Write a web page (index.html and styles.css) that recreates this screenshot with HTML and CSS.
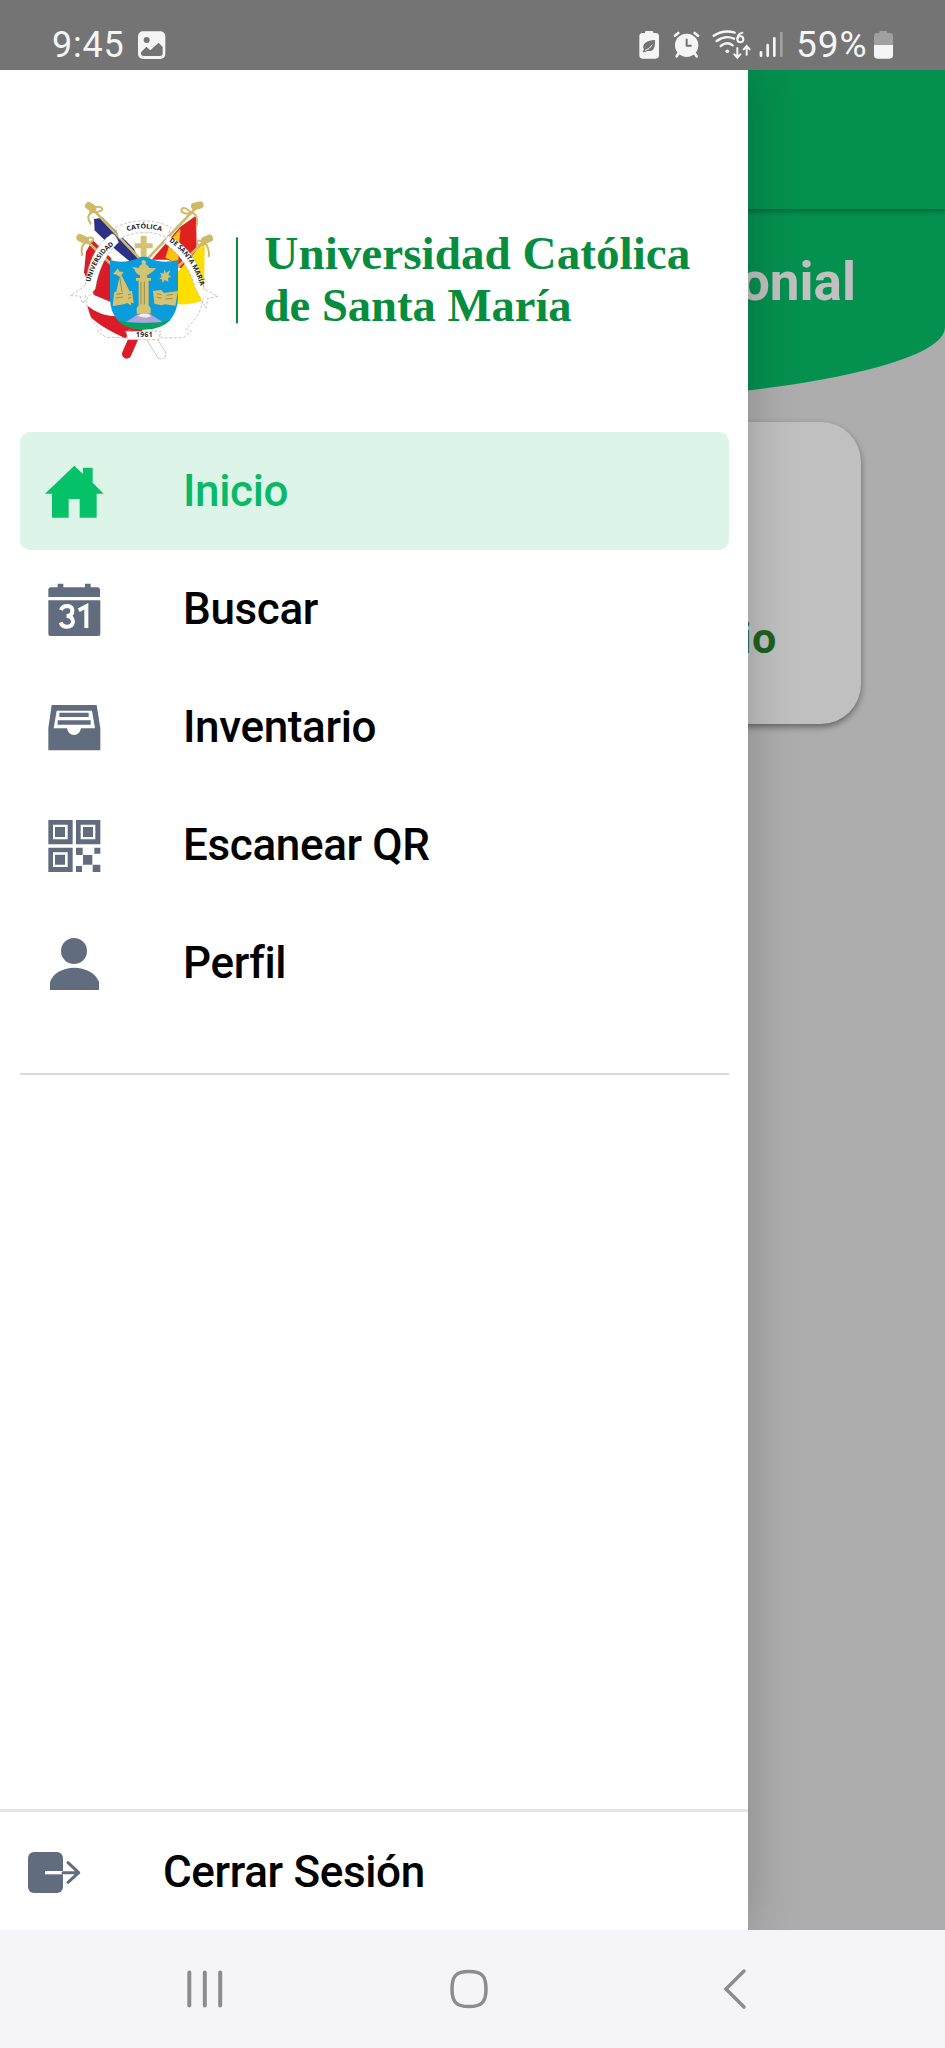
FILE: index.html
```html
<!DOCTYPE html>
<html lang="es">
<head>
<meta charset="utf-8">
<title>Universidad Católica de Santa María</title>
<link rel="stylesheet" href="styles.css">
</head>
<body>
<div class="phone">
  <header class="status">
    <span class="clock">9:45</span>
    <svg class="st-img" width="28" height="30" viewBox="414 90 84 90"><rect x="414" y="94" width="82" height="83" rx="15" fill="#f5f5f5"/><circle cx="440" cy="120" r="9" fill="#747474"/><path d="M423 157l16-17 12 11 25-23 12 13v19q0 8-8 8h-49q-8 0-8-8z" fill="#747474"/></svg>
    <div class="status-right">
      <svg width="22" height="30" viewBox="54 90 66 90"><path d="M75 99v-3q0-3 4-3h17q4 0 4 3v3h7q10 0 10 10v57q0 10-10 10H68q-10 0-10-10v-57q0-10 10-10z" fill="#f5f5f5"/><path d="M105 120c2 26-7 35-20 33-8 0-10 4-14 4-5-2-3-5 1-7-8-17 6-29 33-30z" fill="#747474"/><path d="M75 151q13-2 22-17" stroke="#f5f5f5" stroke-width="3" fill="none"/></svg>
      <svg class="st-alarm" width="27" height="30" viewBox="159 90 81 90"><g stroke="#f5f5f5" stroke-width="8" stroke-linecap="round"><path d="M165 107l10-8M224 99l10 8M176 160l-6 9M224 160l6 9"/></g><circle cx="200" cy="136" r="35" fill="#f5f5f5"/><path d="M200 116v21h15" fill="none" stroke="#747474" stroke-width="6"/></svg>
      <svg class="st-wifi" width="40" height="30" viewBox="276 90 120 90"><g fill="none" stroke="#f5f5f5" stroke-width="7" stroke-linecap="round"><path d="M281 107Q312 88 344 98M290 123Q316 104 342 116M302 138Q321 123 338 136"/><path d="M367 98Q352 102 352 117" stroke-width="6"/><circle cx="361" cy="118" r="9" stroke-width="6"/><path d="M352 144v28M343 163l9 10 9-10M380 164v-26M371 148l9-10 9 10" stroke-width="6"/></g><circle cx="322" cy="154" r="5.500" fill="#f5f5f5"/></svg>
      <svg class="st-signal" width="25" height="30" viewBox="417 90 75 90"><g stroke="#f5f5f5" stroke-width="8" stroke-linecap="round"><path d="M423 157v10M443 135v32M463 115v52"/><path d="M484 99v68" opacity=".35"/></g></svg>
      <span class="percent">59%</span>
      <svg width="21" height="30" viewBox="759 90 63 90"><path d="M778 99v-3q0-3 4-3h16q4 0 4 3v3h8q9 0 9 9v27h-57v-27q0-9 9-9z" fill="#a0a0a0"/><path d="M762 135h57v31q0 10-10 10h-37q-10 0-10-10z" fill="#f5f5f5"/></svg>
    </div>
  </header>

  <div class="screen">
    <div class="appbar"></div>
    <section class="hero"><h1 class="hero-title">onial</h1></section>
    <section class="card"><span class="card-label">io</span></section>

    <aside class="drawer">
      <div class="brand">
        <svg width="660" height="190" viewBox="0 0 1980 570">
          <!-- flags -->
          <g>
            <path d="M98 165L78 200 72 262 88 300 102 330 154 352V220z" fill="#d91c27"/>
            <path d="M80 345Q105 350 155 352L160 400 90 372z" fill="#fff"/>
            <path d="M82 362Q120 395 180 394L222 430 196 460Q120 425 92 396z" fill="#d91c27"/>
            <path d="M104 100l22-8 60 42 72 86-44 6-58-42z" fill="#fff"/>
            <path d="M102 102l26-4L222 192l18 38-32-2Q136 170 104 136z" fill="#2c3086"/>
            <path d="M408 92L360 126 275 224H322L400 250 410 180z" fill="#e02020"/>
            <path d="M360 132l30 52 2 70-76-36 18-56z" fill="#fcc20d"/>
            <path d="M408 92L362 128 358 170 354 245 375 256 408 190z" fill="#df231c"/>
            <path d="M434 180L432 345Q395 360 352 358V262L418 188z" fill="#ffde00"/>
            <path d="M352 360Q395 364 430 346Q424 400 376 436L310 426z" fill="#fff"/>
          </g>
          <!-- poles and bows -->
          <g fill="none" stroke="#cdbb65" stroke-width="8" stroke-linecap="round">
            <path d="M94 68L238 220M72 160L160 244M408 68L262 222M434 168L340 258"/>
            <path d="M90 82q20-24 34-14 12 12-28 14-20 10-4 34M68 168q20-16 30-8 10 10-24 14-12 12-8 36M394 84q-24-24-30-10 0 16 36 10 16 12 10 38M430 172q-20-12-18 2 4 14 26 2 12 20 8 38" stroke-width="6"/>
            <path d="M86 62l12 8M60 158l16 8M404 64l16-4M434 166l14-6" stroke-width="22"/>
          </g>
          <!-- crossed shafts -->
          <path d="M236 425L200 507" stroke="#d91c27" stroke-width="28" stroke-linecap="round"/>
          <path d="M262 440L304 508" stroke="#aaa" stroke-width="30" stroke-linecap="round"/><path d="M262 440L304 508" stroke="#fff" stroke-width="27" stroke-linecap="round"/>
          <!-- ribbon -->
          <g fill="#fff" stroke="#aaa" stroke-width="2" stroke-dasharray="9 5">
            <path d="M76 300Q88 190 156 146Q166 146 176 172Q120 222 106 312L68 356 60 333 30 332Q62 315 76 300z"/>
            <path d="M431 312Q416 196 324 152L311 172Q384 224 405 308L438 370 443 340 474 334z"/>
            <path d="M166 127Q250 88 333 127L321 158Q252 124 178 162z"/>
            <path d="M76 330Q82 402 125 435L112 438 138 457 208 458 196 440 218 430H284L300 446 304 459 370 458 394 438 378 432Q424 391 430 338" fill="none"/>
            <path d="M198 439H302L296 464H204z"/>
          </g>
          <!-- shield -->
          <path d="M150 225Q190 238 235 220Q251 205 268 220Q306 238 354 225V340Q350 430 252 432Q151 430 150 340z" fill="#0b9cdc"/>
          <path d="M170 404Q206 416 250 414Q300 416 334 403Q305 434 252 434Q198 434 170 404z" fill="#08a35c"/>
          <path d="M198 411L234 388 270 387 308 411Q252 416 198 411z" fill="#b4a4d1"/><path d="M232 393l14-8h16l12 9-16 4z" fill="#eee"/>
          <g fill="#d5c374">
            <path d="M242 153h18v22h18v15h-18v25h-18v-25h-18v-15h18z"/>
            <path d="M224 254l-8-8 20 3q3-10 11-12l-4-7 8-6 8 7-3 6q9 4 12 12l21 1q-22 20-29 22l2 7h11v8h-7v74l6 9v16h-42v-16l6-9v-74h-8v-8h12v-8q-12-4-16-17z"/>
            <path d="M173 250l6 10 12 1-7 10 5 8 24 48v34l-12-7-39 8 7-43 10-43-9-7-12-2 9-8z"/>
            <path d="M163 321l30-6 4 10 19-8 5 38-19-5-7 7-37 6zM279 318l25-3 8 9 42-6-8 44-31-4-11 3-21-5z"/>
            <path d="M313 253l5 11 13-8-6 15 9 3-10 5 1 11-11-5-6 9-2-11-8-2 7-6-5-12 11 3z"/>
          </g>
          <path d="M169 328l20-3M168 339l21-3M291 326l14 3M290 337l14 2M319 331l20-3M317 342l21-2M204 330l9-3M205 340l9-3M179 275l7 45M243 290v68M253 290v68" stroke="#80712f" stroke-width="2"/>
          <defs><path id="arc-left" d="M91 292Q107 215 168 176"/><path id="arc-top" d="M202 139Q253 121 307 140"/><path id="arc-right" d="M327 169Q396 214 424 312"/></defs>
          <g class="ribbon-text">
            <text textLength="136" lengthAdjust="spacingAndGlyphs"><textPath href="#arc-left">UNIVERSIDAD</textPath></text>
            <text textLength="104" lengthAdjust="spacingAndGlyphs"><textPath href="#arc-top">CATÓLICA</textPath></text>
            <text textLength="168" lengthAdjust="spacingAndGlyphs"><textPath href="#arc-right">DE SANTA MARÍA</textPath></text>
            <text x="228" y="456" textLength="50">1961</text>
          </g>
          <rect x="528" y="157" width="6" height="258" fill="#078d3d"/>
          <g class="brand-name">
            <text x="613" y="252" textLength="1278" lengthAdjust="spacingAndGlyphs">Universidad Católica</text>
            <text x="611" y="408" textLength="924" lengthAdjust="spacingAndGlyphs">de Santa María</text>
          </g>
        </svg>
      </div>

      <nav class="menu">
        <a class="item active"><svg class="icon" viewBox="132 123 180 180"><path d="M223 137L249 162V143H278V188L311 221H290V293H239V237H206V293H156V221H135z"/></svg><span>Inicio</span></a>
        <a class="item"><svg class="icon" viewBox="132 477 180 180"><path d="M145 531V510q0-8 8-8h20v-11h17v11h65v-11h17v11h20q8 0 8 8v21zM145 541H301V642q0 6-6 6H151q-6 0-6-6z"/><path d="M183 570q5-12 19-12 15 1 15 14 0 15-17 16 19 1 19 17-2 15-18 15-15 0-19-13M236 571l23-12v65" fill="none" stroke="#fff" stroke-width="12"/></svg><span>Buscar</span></a>
        <a class="item"><svg class="icon" viewBox="132 111 180 180"><path fill-rule="evenodd" d="M155 135H290L301 205V271H145V205zM170 152L161 205H201Q205 225 222 225T243 205H285L276 152z"/><path d="M178 158h88v13h-88zM173 181h99v13h-99z"/></svg><span>Inventario</span></a>
        <a class="item"><svg class="icon" viewBox="132 465 180 180"><path fill-rule="evenodd" d="M145 480h73v73h-73zm14 14v44h44v-44zM228 480h73v73h-73zm14 14v44h44v-44zM145 563h73v73h-73zm14 14v44h44v-44z"/><path d="M165 501h30v30h-30zM249 501h30v30h-30zM165 584h30v30h-30zM228 563h20v22h29v29h24v22h-23v-22h-29v-29h-21zM283 563h18v18h-18zM228 618h18v18h-18z"/></svg><span>Escanear QR</span></a>
        <a class="item"><svg class="icon" viewBox="132 129 180 180"><circle cx="222" cy="183" r="39"/><path d="M150 300V276C158 249 191 233 223 233S288 249 297 276V300z"/></svg><span>Perfil</span></a>
      </nav>
      <hr class="divider">
      <footer class="logout"><svg class="icon" viewBox="72 153 180 180"><rect x="84" y="186" width="105" height="123" rx="18"/><path d="M135 248h54" stroke="#fff" stroke-width="10"/><path d="M189 248h47M204 218l32 30-32 29" fill="none" stroke="#616d7e" stroke-width="9" stroke-linecap="round" stroke-linejoin="round"/></svg><span>Cerrar Sesión</span></footer>
    </aside>
  </div>

  <footer class="navbar">
    <svg width="36" height="40" viewBox="0 0 36 40"><path d="M2.300 3.500v33M17.800 3.500v33M33.200 3.500v33" stroke="#8c8c8e" stroke-width="4" stroke-linecap="round"/></svg>
    <svg class="nav-home" width="40" height="40" viewBox="0 0 40 40"><path d="M20 2.500C33 2.500 37 7 37 20S33 37.500 20 37.500 3 33 3 20 7 2.500 20 2.500z" fill="none" stroke="#8c8c8e" stroke-width="3.500"/></svg>
    <svg class="nav-back" width="26" height="42" viewBox="0 0 26 42"><path d="M22 3L4 21 22 39" fill="none" stroke="#8c8c8e" stroke-width="3.500" stroke-linecap="round"/></svg>
  </footer>
</div>
</body>
</html>
```
FILE: styles.css
```css
* { box-sizing: border-box; }
body { margin: 0; font-family: Roboto, "Liberation Sans", sans-serif; }
svg { display: block; flex: none; }
.phone { width: 945px; height: 2048px; display: flex; flex-direction: column; overflow: hidden; }

.status { height: 70px; flex: none; display: flex; align-items: center; padding: 20px 51px 0 52px; background: #747474; color: #f5f5f5; font-size: 36px; line-height: 50px; }
.clock { width: 86px; letter-spacing: .8px; }
.status-right { display: flex; align-items: center; margin-left: auto; }
.st-alarm { margin-left: 13px; }
.st-wifi { margin-left: 12px; }
.st-signal { margin-left: 7px; }
.percent { width: 77px; margin: 0 0 0 12px; font-size: 37px; letter-spacing: .9px; }

.screen { position: relative; height: 1860px; flex: none; overflow: hidden; background: #adadad; }
.appbar { position: relative; height: 139px; background: #04904f; box-shadow: 0 2px 5px rgba(0, 0, 0, .35); }
.hero { height: 196px; padding: 35px 89px 0 0; text-align: right; background: #04904f; border-radius: 0 0 472.5px 472.5px / 0 0 78px 78px; }
.hero-title { margin: 0; font-size: 53px; line-height: 76px; font-weight: 700; color: #c0c0c0; }
.card { width: 777px; height: 302px; margin: 17px 84px 0; padding: 191px 84px 0 0; text-align: right; border-radius: 40px; background: #c0c0c0; box-shadow: 0 3px 6px rgba(0, 0, 0, .42); }
.card-label { font-size: 43px; line-height: 50px; font-weight: 700; letter-spacing: .7px; color: #1c6320; }

.drawer { position: absolute; top: 0; left: 0; width: 748px; height: 1860px; display: flex; flex-direction: column; background: #fff; box-shadow: 0 0 48px rgba(0, 0, 0, .22); }
.brand { height: 362px; flex: none; padding: 115px 0 0 60px; }
.ribbon-text { font: 700 20px "Open Sans", sans-serif; fill: #222; }
.brand-name { font: 700 138px "Liberation Serif", serif; fill: #078d3d; }
.menu { display: flex; flex-direction: column; padding: 0 19px 0 20px; }
.item { height: 118px; display: flex; align-items: center; gap: 79px; padding-left: 24px; border-radius: 10px; color: #000; font-size: 44px; font-weight: 500; letter-spacing: -.35px; }
.icon { width: 60px; height: 60px; fill: #616d7e; }
.active { color: #0ab968; background: #dcf5e8; }
.active .icon { fill: #05c168; }
.divider { width: 709px; height: 2px; margin: 51px 0 0 20px; border: 0; background: #d9dbdb; }
.logout { height: 121px; margin-top: auto; display: flex; align-items: center; gap: 79px; padding: 0 0 1px 24px; border-top: 3px solid #e6e6e6; font-size: 44px; font-weight: 500; letter-spacing: -.35px; color: #000; }
.logout span { padding-top: 2px; }

.navbar { height: 118px; flex: none; display: flex; align-items: center; padding-left: 187px; background: #f5f5f7; }
.nav-home { margin-left: 226px; }
.nav-back { margin-left: 233px; }
```
